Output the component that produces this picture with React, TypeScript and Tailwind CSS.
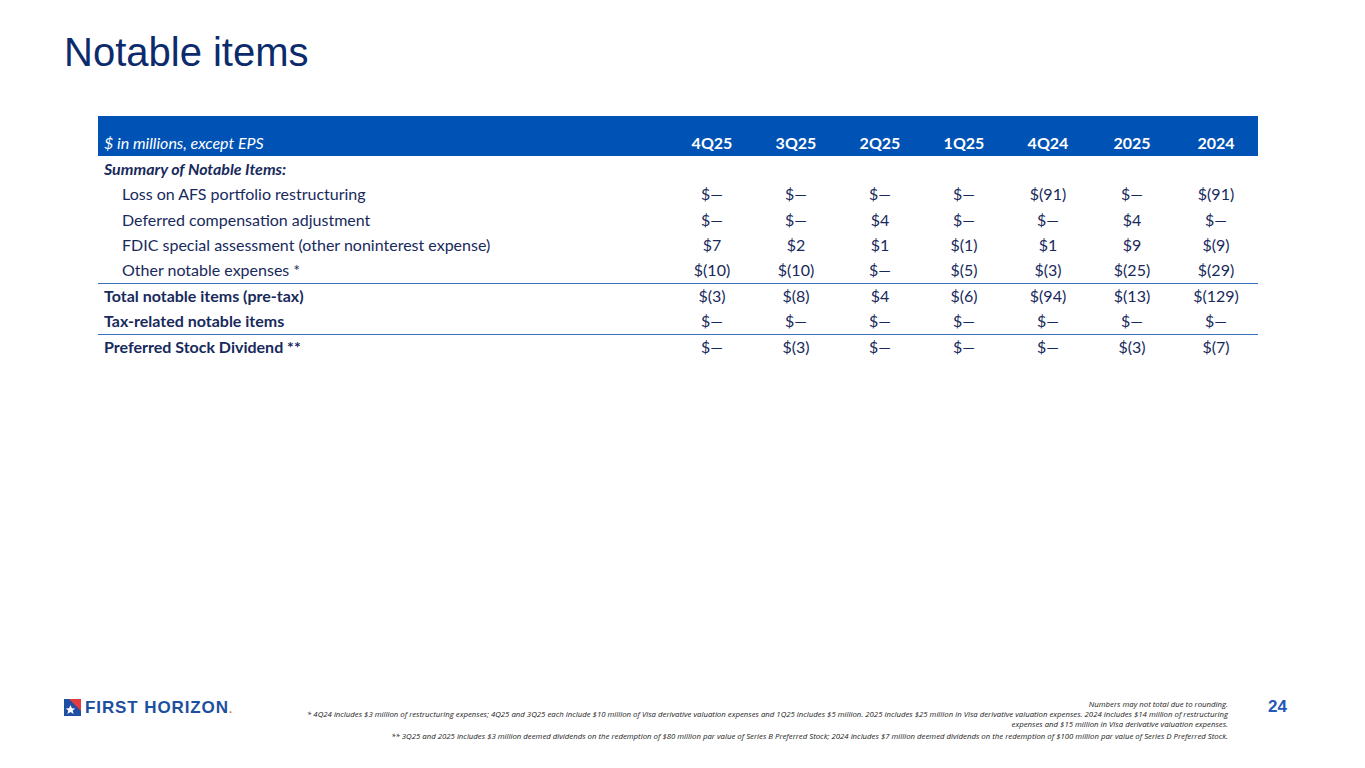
const COLS = ['4Q25', '3Q25', '2Q25', '1Q25', '4Q24', '2025', '2024']

type Row = {
  label: string
  values?: string[]
  kind: 'section' | 'item' | 'total'
  lineBelow?: boolean
}

const D = '$\u2014'

const ROWS: Row[] = [
  { label: 'Summary of Notable Items:', kind: 'section' },
  { label: 'Loss on AFS portfolio restructuring', kind: 'item', values: [D, D, D, D, '$(91)', D, '$(91)'] },
  { label: 'Deferred compensation adjustment', kind: 'item', values: [D, D, '$4', D, D, '$4', D] },
  { label: 'FDIC special assessment (other noninterest expense)', kind: 'item', values: ['$7', '$2', '$1', '$(1)', '$1', '$9', '$(9)'] },
  { label: 'Other notable expenses *', kind: 'item', values: ['$(10)', '$(10)', D, '$(5)', '$(3)', '$(25)', '$(29)'], lineBelow: true },
  { label: 'Total notable items (pre-tax)', kind: 'total', values: ['$(3)', '$(8)', '$4', '$(6)', '$(94)', '$(13)', '$(129)'] },
  { label: 'Tax-related notable items', kind: 'total', values: [D, D, D, D, D, D, D], lineBelow: true },
  { label: 'Preferred Stock Dividend **', kind: 'total', values: [D, '$(3)', D, D, D, '$(3)', '$(7)'] },
]

function Logo() {
  return (
    <div className="flex items-center gap-[4px]">
      <svg width="17" height="17" viewBox="0 0 17 17">
        <rect width="17" height="17" fill="#1f4fa3" />
        <polygon points="5,0 17,0 17,12" fill="#e23b3f" />
        <polygon
          points="6.5,6 7.9,9.3 11.3,9.5 8.7,11.6 9.6,15 6.5,13.1 3.4,15 4.3,11.6 1.7,9.5 5.1,9.3"
          fill="#ffffff"
        />
      </svg>
      <span className="text-[17px] font-bold tracking-[0.9px] text-[#1d4fa0] leading-none" style={{ fontFamily: '"Liberation Sans", Arial, sans-serif' }}>
        FIRST HORIZON<span className="text-[11px] text-[#e0653a]">.</span>
      </span>
    </div>
  )
}

export default function App() {
  return (
    <div className="w-[1365px] h-[768px] bg-white flex flex-col overflow-hidden" style={{ fontFamily: 'Lato, "Open Sans", sans-serif' }}>
      <h1
        className="pl-[64px] pt-[28px] text-[40px] leading-[48px] text-[#0c2b6c]"
        style={{ fontFamily: '"Liberation Sans", Arial, sans-serif' }}
      >
        Notable items
      </h1>

      <div className="ml-[98px] mt-[40px] w-[1160px] text-[16px] text-[#182a5c]">
        <div className="flex items-end h-[40px] bg-[#0052b4] text-white pb-[1px]">
          <div className="w-[572px] pl-[6px] italic">$ in millions, except EPS</div>
          {COLS.map((c) => (
            <div key={c} className="w-[84px] text-center font-bold">
              {c}
            </div>
          ))}
        </div>
        {ROWS.map((r) => (
          <div
            key={r.label}
            className={
              'flex items-center h-[25.5px] ' + (r.lineBelow ? 'border-b-[1.5px] border-[#3b6fc0]' : '')
            }
          >
            <div
              className={
                'w-[572px] ' +
                (r.kind === 'section' ? 'pl-[6px] font-bold italic' : r.kind === 'total' ? 'pl-[6px] font-bold' : 'pl-[24px]')
              }
            >
              {r.label}
            </div>
            {r.values?.map((v, i) => (
              <div key={i} className="w-[84px] text-center">
                {v}
              </div>
            ))}
          </div>
        ))}
      </div>

      <div className="flex-1" />

      <div className="flex items-start pb-[27px]">
        <div className="pl-[64px] pt-[0px] w-[300px]">
          <Logo />
        </div>
        <div className="flex-1 text-right italic text-[7.8px] leading-[10px] text-[#222]" style={{ fontFamily: '"Open Sans", sans-serif' }}>
          <p>Numbers may not total due to rounding.</p>
          <p>
            * 4Q24 includes $3 million of restructuring expenses; 4Q25 and 3Q25 each include $10 million of Visa derivative valuation expenses and 1Q25 includes $5 million. 2025 includes $25 million in Visa derivative valuation expenses. 2024 includes $14 million of restructuring
          </p>
          <p>expenses and $15 million in Visa derivative valuation expenses.</p>
          <p className="mt-[2px]">
            ** 3Q25 and 2025 includes $3 million deemed dividends on the redemption of $80 million par value of Series B Preferred Stock; 2024 includes $7 million deemed dividends on the redemption of $100 million par value of Series D Preferred Stock.
          </p>
        </div>
        <div
          className="w-[137px] pl-[40px] pt-[0px] text-[17px] font-bold text-[#2357b8] leading-[16px]"
          style={{ fontFamily: '"Liberation Sans", Arial, sans-serif' }}
        >
          24
        </div>
      </div>
    </div>
  )
}
